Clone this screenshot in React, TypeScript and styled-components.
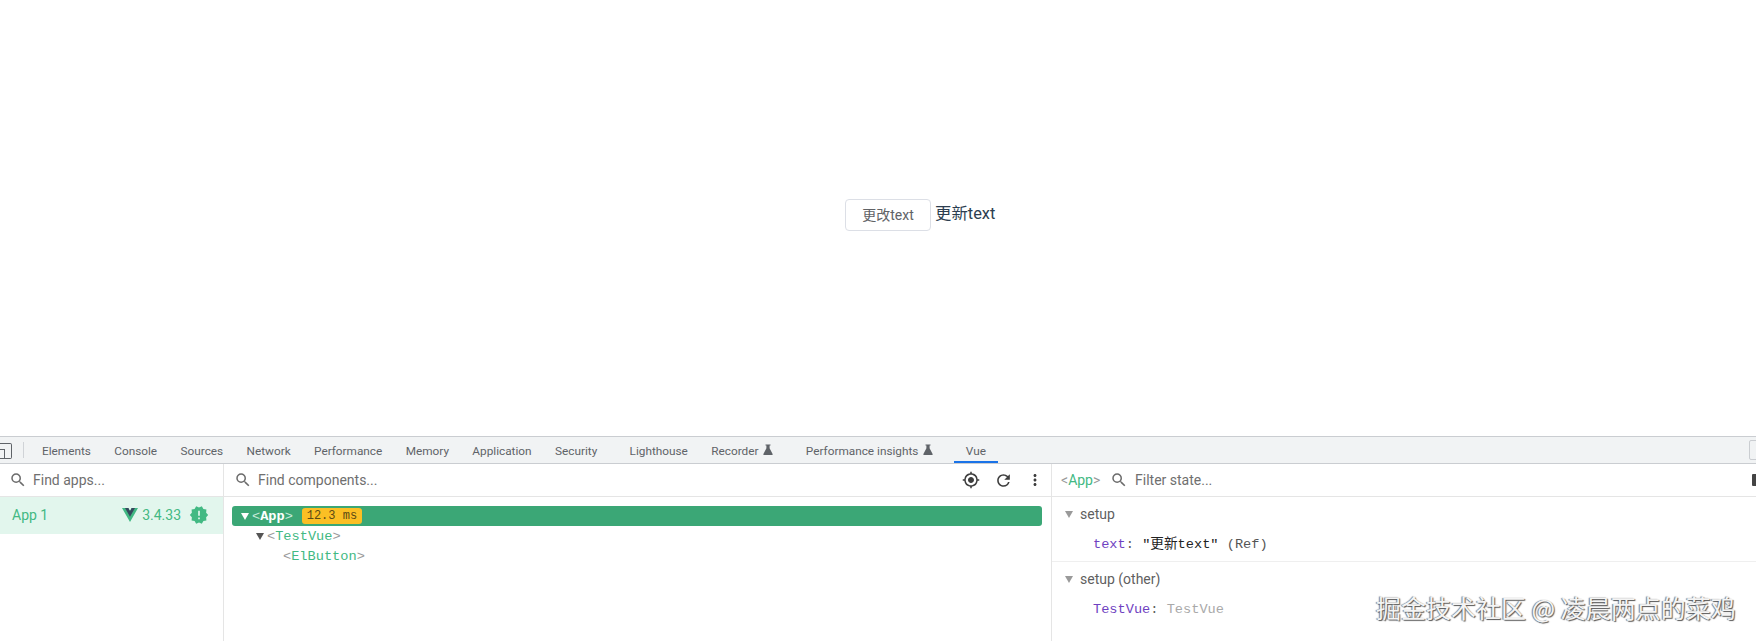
import React from 'react'
import styled, { createGlobalStyle } from 'styled-components'
import { MdSearch, MdGpsFixed, MdRefresh, MdMoreVert, MdNewReleases } from 'react-icons/md'

const GlobalStyle = createGlobalStyle`
  html, body { margin: 0; padding: 0; background: #fff; }
  body { font-family: Roboto, "Noto Sans CJK SC", sans-serif; overflow: hidden; }
`

const MONO = `"Liberation Mono", "Noto Sans CJK SC", monospace`
const TREE_INDENT = [9, 24, 51]
const TABS = [
  { name: 'Elements' },
  { name: 'Console' },
  { name: 'Sources' },
  { name: 'Network' },
  { name: 'Performance' },
  { name: 'Memory' },
  { name: 'Application' },
  { name: 'Security' },
  { name: 'Lighthouse', gap: true },
  { name: 'Recorder', flask: true },
  { name: 'Performance insights', gap: true, flask: true },
  { name: 'Vue', gap: true, active: true },
]

const Flask = () => (
  <FlaskIcon viewBox="0 0 10 11">
    <path d="M2.5 0.5h5v1H6.6v2.8L9.6 10a0.7 0.7 0 0 1-0.6 1H1a0.7 0.7 0 0 1-0.6-1l3-5.7V1.5H2.5z" fill="#5f6368" />
  </FlaskIcon>
)

const VueLogo = () => (
  <VueIcon viewBox="0 0 16 14">
    <path d="M0 0h6.2L8 3.2 9.8 0H16L8 14z" fill="#41b883" />
    <path d="M3 0h3.4L8 3 9.6 0H13L8 8.8z" fill="#35495e" />
  </VueIcon>
)

export default function App() {
  return (
    <Page>
      <GlobalStyle />
      <Preview>
        <UpdateButton>更改text</UpdateButton>
        <PreviewText>更新text</PreviewText>
      </Preview>
      <TabBar>
        <DockIcon />
        <TabDivider />
        {TABS.map((tab) => (
          <Tab key={tab.name} $gap={tab.gap} $active={tab.active}>
            {tab.name}
            {tab.flask && <Flask />}
          </Tab>
        ))}
        <CornerBox />
      </TabBar>
      <Panes>
        <AppsPane>
          <Toolbar>
            <SearchIcon />
            <SearchText>Find apps...</SearchText>
          </Toolbar>
          <AppRow>
            <AppName>App 1</AppName>
            <VueLogo />
            <AppVersion>3.4.33</AppVersion>
            <WarnIcon />
          </AppRow>
        </AppsPane>
        <TreePane>
          <Toolbar $inset={10}>
            <SearchIcon />
            <SearchText>Find components...</SearchText>
            <ToolIcons>
              <MdGpsFixed size={18} />
              <MdRefresh size={19} />
              <MdMoreVert size={18} />
            </ToolIcons>
          </Toolbar>
          <Tree>
            <TreeRow $depth={0} $selected>
              <Caret $light />
              <Bracket $light>&lt;</Bracket>App<Bracket $light>&gt;</Bracket>
              <TimeBadge>12.3 ms</TimeBadge>
            </TreeRow>
            <TreeRow $depth={1}>
              <Caret />
              <Bracket>&lt;</Bracket>TestVue<Bracket>&gt;</Bracket>
            </TreeRow>
            <TreeRow $depth={2}>
              <Bracket>&lt;</Bracket>ElButton<Bracket>&gt;</Bracket>
            </TreeRow>
          </Tree>
        </TreePane>
        <StatePane>
          <Toolbar>
            <SelectedName>
              <Bracket>&lt;</Bracket>App<Bracket>&gt;</Bracket>
            </SelectedName>
            <SearchIcon />
            <FilterText>Filter state...</FilterText>
            <EdgeMark />
          </Toolbar>
          <StateSection $divided>
            <SectionHead>
              <SmallCaret />
              setup
            </SectionHead>
            <StateRow>
              <Key>text</Key>
              <Colon>: </Colon>
              <StringValue>"更新text"</StringValue>
              <RefNote> (Ref)</RefNote>
            </StateRow>
          </StateSection>
          <StateSection>
            <SectionHead>
              <SmallCaret />
              setup (other)
            </SectionHead>
            <StateRow>
              <Key>TestVue</Key>
              <Colon>: </Colon>
              <MutedValue>TestVue</MutedValue>
            </StateRow>
          </StateSection>
        </StatePane>
      </Panes>
      <Watermark>掘金技术社区 @ 凌晨两点的菜鸡</Watermark>
    </Page>
  )
}

const Page = styled.div`
  position: relative;
  width: 1756px;
  height: 641px;
  display: flex;
  flex-direction: column;
  overflow: hidden;
  background: #fff;
`

const Preview = styled.div`
  height: 436px;
  box-sizing: border-box;
  padding: 199px 0 0 845px;
  display: flex;
  align-items: flex-start;
`

const UpdateButton = styled.button`
  width: 86px;
  height: 32px;
  padding: 0 0 2px;
  background: #fff;
  border: 1px solid #dcdfe6;
  border-radius: 4px;
  color: #606266;
  font: 14px Roboto, "Noto Sans CJK SC", sans-serif;
`

const PreviewText = styled.span`
  margin-left: 4px;
  font-size: 16.4px;
  line-height: 30px;
  color: #2c3e50;
`

const TabBar = styled.div`
  height: 28px;
  box-sizing: border-box;
  display: flex;
  align-items: stretch;
  background: #f1f3f4;
  border-top: 1px solid #cacdd1;
  border-bottom: 1px solid #cacdd1;
  font-size: 11.8px;
  color: #5f6368;
`

const DockIcon = styled.div`
  width: 11px;
  height: 14px;
  margin: 6px 0 0 0;
  border: 1px solid #5f6368;
  border-left: none;
  border-radius: 0 2px 2px 0;
  background: linear-gradient(#5f6368, #5f6368) 0 5px / 4px 1px no-repeat,
    linear-gradient(#5f6368, #5f6368) 4px 5px / 1px 9px no-repeat;
`

const TabDivider = styled.div`
  width: 1px;
  height: 16px;
  margin: 5px 6.3px 0 11px;
  background: #d0d3d7;
`

const Tab = styled.div<{ $gap?: boolean; $active?: boolean }>`
  display: flex;
  align-items: center;
  gap: 5px;
  padding: 2px 11.7px 0;
  margin-left: ${(p) => (p.$gap ? '9px' : '0')};
  white-space: nowrap;
  box-shadow: ${(p) => (p.$active ? 'inset 0 -2px 0 #1a73e8' : 'none')};
`

const FlaskIcon = styled.svg`
  width: 10px;
  height: 11px;
  margin-top: -3px;
`

const CornerBox = styled.div`
  width: 12px;
  height: 20px;
  box-sizing: border-box;
  margin: 3px -5px 0 auto;
  border: 1px solid #cacdd1;
  border-radius: 2px;
`

const Panes = styled.div`
  flex: 1;
  display: flex;
  min-height: 0;
`

const AppsPane = styled.div`
  width: 224px;
  box-sizing: border-box;
  border-right: 1px solid #e5e5e5;
`

const TreePane = styled.div`
  width: 828px;
  box-sizing: border-box;
  border-right: 1px solid #e5e5e5;
`

const StatePane = styled.div`
  flex: 1;
`

const Toolbar = styled.div<{ $inset?: number }>`
  height: 33px;
  box-sizing: border-box;
  display: flex;
  align-items: center;
  padding-left: ${(p) => p.$inset ?? 9}px;
  border-bottom: 1px solid #e5e5e5;
`

const SearchIcon = styled(MdSearch)`
  width: 18px;
  height: 18px;
  color: #6b6b6b;
  flex: none;
`

const SearchText = styled.span`
  margin-left: 6px;
  font-size: 14px;
  color: #6f6f6f;
`

const FilterText = styled(SearchText)`
  margin-left: 7px;
`

const ToolIcons = styled.div`
  margin-left: auto;
  width: 82px;
  display: flex;
  justify-content: space-between;
  align-items: center;
  padding-right: 7px;
  color: #3d3d3d;
`

const AppRow = styled.div`
  height: 37px;
  box-sizing: border-box;
  display: flex;
  align-items: center;
  padding: 0 14px 2px 12px;
  background: #e2f6ed;
  color: #42b983;
  font-size: 14px;
`

const AppName = styled.span`
  margin-right: auto;
`

const VueIcon = styled.svg`
  width: 16px;
  height: 14px;
`

const AppVersion = styled.span`
  margin-left: 4px;
`

const WarnIcon = styled(MdNewReleases)`
  width: 20px;
  height: 20px;
  margin-left: 8px;
  color: #42b983;
`

const Tree = styled.div`
  padding: 9px 9px 0 8px;
  font-family: ${MONO};
  font-size: 13.65px;
  color: #42b983;
`

const TreeRow = styled.div<{ $depth: number; $selected?: boolean }>`
  height: 20px;
  display: flex;
  align-items: center;
  box-sizing: border-box;
  padding-left: ${(p) => TREE_INDENT[p.$depth]}px;
  border-radius: 3px;
  white-space: pre;
  background: ${(p) => (p.$selected ? '#3ba776' : 'transparent')};
  color: ${(p) => (p.$selected ? '#fff' : '#42b983')};
  font-weight: ${(p) => (p.$selected ? 700 : 400)};
`

const Caret = styled.span<{ $light?: boolean }>`
  width: 0;
  height: 0;
  margin-right: 3px;
  border-left: 4px solid transparent;
  border-right: 4px solid transparent;
  border-top: 7px solid ${(p) => (p.$light ? '#fff' : '#555')};
`

const Bracket = styled.span<{ $light?: boolean }>`
  color: ${(p) => (p.$light ? '#c6ead9' : '#9a9a9a')};
  font-weight: 400;
`

const TimeBadge = styled.span`
  margin-left: 9px;
  width: 60px;
  height: 16px;
  border-radius: 3px;
  background: #fbbf24;
  color: #5c4a14;
  font-size: 12px;
  font-weight: 400;
  line-height: 17px;
  text-align: center;
`

const SelectedName = styled.span`
  width: 45px;
  margin-right: 4px;
  font-size: 14px;
  color: #42b983;
`

const EdgeMark = styled.div`
  width: 4px;
  height: 12px;
  margin-left: auto;
  background: #444;
  border-radius: 1px 0 0 1px;
`

const StateSection = styled.div<{ $divided?: boolean }>`
  height: ${(p) => (p.$divided ? '65px' : '80px')};
  box-sizing: border-box;
  padding-top: 5px;
  border-bottom: ${(p) => (p.$divided ? '1px solid #efefef' : 'none')};
`

const SectionHead = styled.div`
  height: 24px;
  display: flex;
  align-items: center;
  padding-left: 13px;
  gap: 7px;
  font-size: 14px;
  color: #5f5f5f;
`

const SmallCaret = styled.span`
  width: 0;
  height: 0;
  border-left: 4px solid transparent;
  border-right: 4px solid transparent;
  border-top: 7px solid #9a9a9a;
`

const StateRow = styled.div`
  margin-top: 9px;
  padding-left: 41px;
  height: 20px;
  line-height: 20px;
  font-family: ${MONO};
  font-size: 13.65px;
  white-space: pre;
`

const Key = styled.span`
  color: #6f42c1;
`

const Colon = styled.span`
  color: #5f5f5f;
`

const StringValue = styled.span`
  color: #222;
`

const RefNote = styled.span`
  color: #555;
`

const MutedValue = styled.span`
  color: #a9a9a9;
`

const Watermark = styled.div`
  position: absolute;
  left: 1376px;
  top: 590px;
  font-family: "Noto Sans CJK SC", sans-serif;
  font-size: 25px;
  line-height: 34px;
  white-space: nowrap;
  color: #f4f4f4;
  text-shadow: 1px 1px 1px #555, -1px 0 1px #777;
`
